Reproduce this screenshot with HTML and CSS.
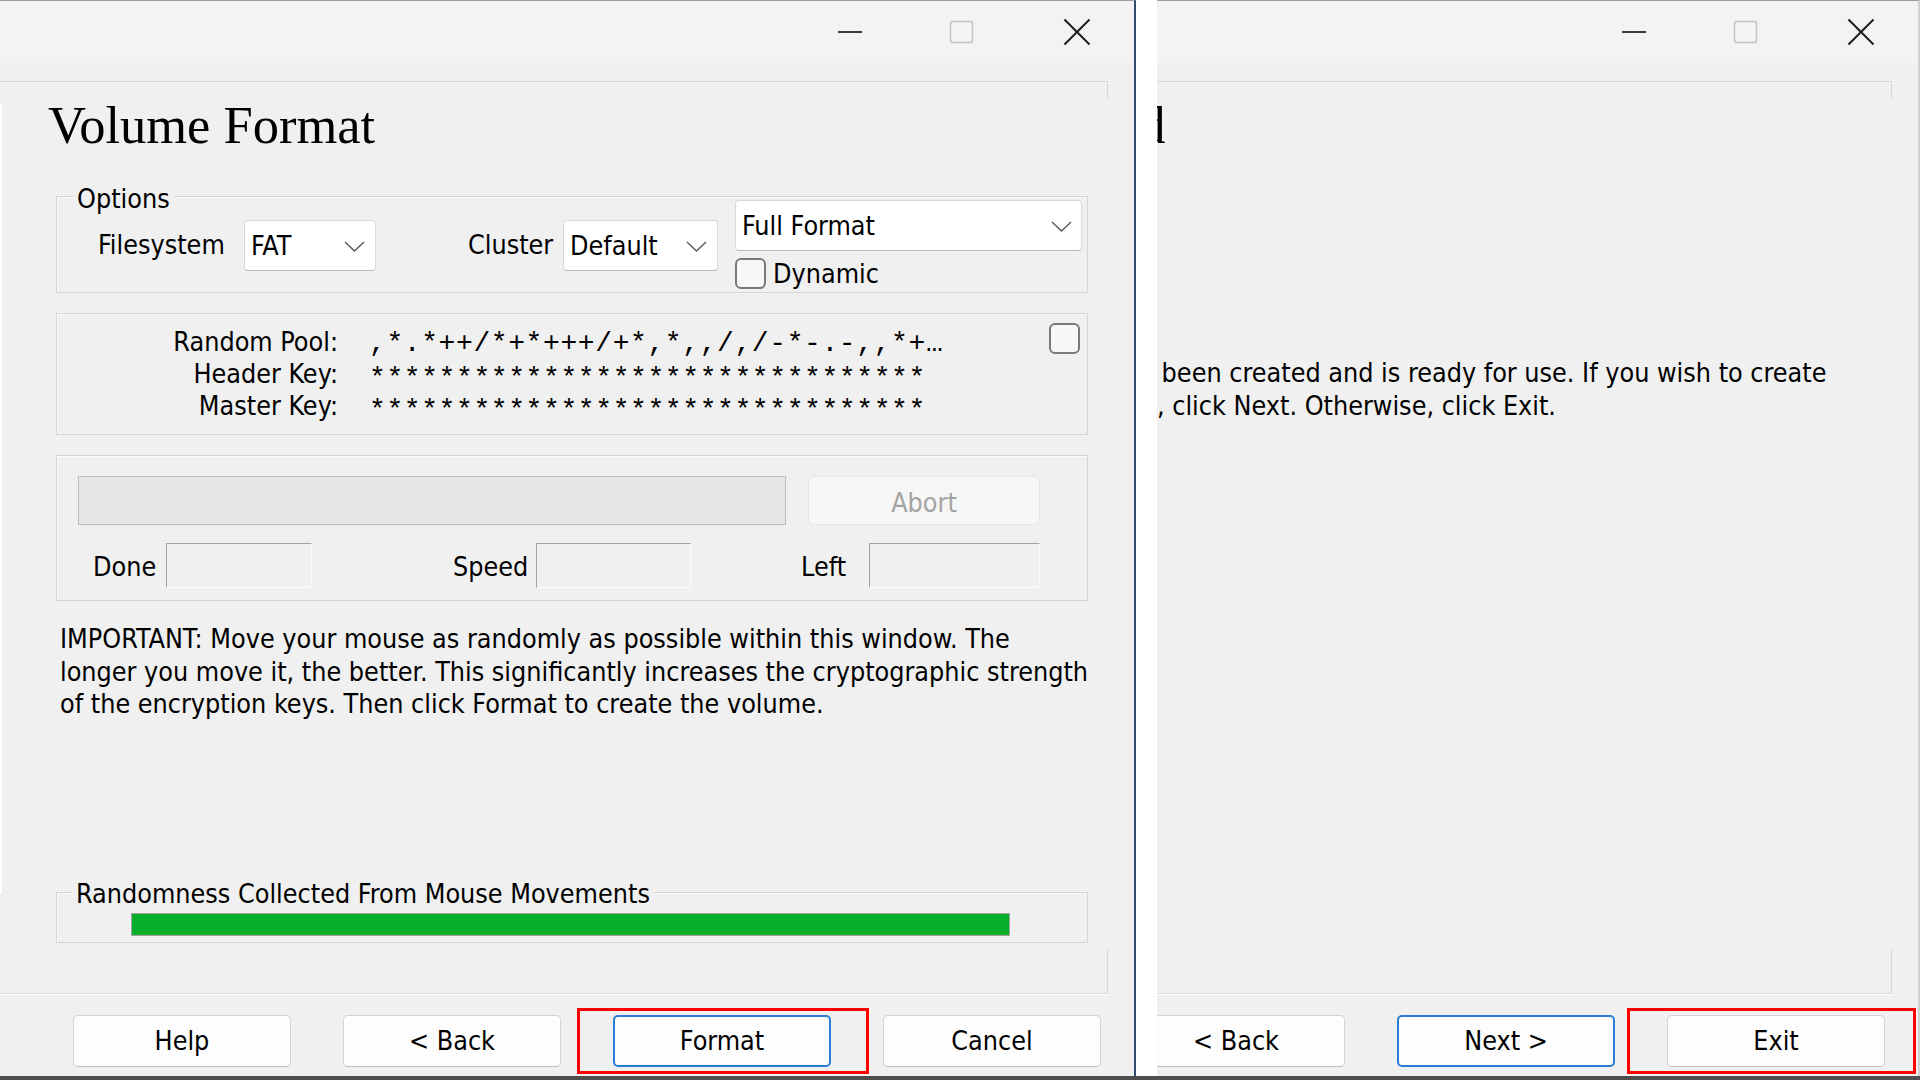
FILE: index.html
```html
<!DOCTYPE html>
<html>
<head>
<meta charset="utf-8">
<title>VeraCrypt Volume Creation Wizard</title>
<link rel="stylesheet" href="styles.css">
</head>
<body>
<div class="screen">
  <div class="win win-left">
    <div class="titlebar">
      <div class="cap cap-min"><svg width="26" height="4" viewBox="0 0 26 4"><path d="M1 2h24" stroke="#1b1b1b" stroke-width="1.7"/></svg></div>
      <div class="cap"><svg width="25" height="24" viewBox="0 0 25 24"><rect x="1.5" y="1.5" width="22" height="21" rx="2.5" fill="none" stroke="#c2c2c2" stroke-width="1.5"/></svg></div>
      <div class="cap"><svg width="28" height="28" viewBox="0 0 28 28"><path d="M1.5 1.5l25 25M26.5 1.5l-25 25" stroke="#1b1b1b" stroke-width="2"/></svg></div>
    </div>
    <div class="band"></div>
    <div class="frame">
      <div class="page">
        <h1 class="title">Volume Format</h1>

        <div class="group g-options">
          <span class="legend">Options</span>
          <div class="opt-row">
            <span class="lbl lbl-fs">Filesystem</span>
            <div class="combo c-fs"><span>FAT</span><svg width="21" height="11" viewBox="0 0 21 11"><path d="M1 1l9.5 9 9.5-9" fill="none" stroke="#5c5c5c" stroke-width="1.5"/></svg></div>
            <span class="lbl lbl-cl">Cluster</span>
            <div class="combo c-cl"><span>Default</span><svg width="21" height="11" viewBox="0 0 21 11"><path d="M1 1l9.5 9 9.5-9" fill="none" stroke="#5c5c5c" stroke-width="1.5"/></svg></div>
            <div class="opt-col">
              <div class="combo c-ff"><span>Full Format</span><svg width="21" height="11" viewBox="0 0 21 11"><path d="M1 1l9.5 9 9.5-9" fill="none" stroke="#5c5c5c" stroke-width="1.5"/></svg></div>
              <div class="check-row"><span class="checkbox"></span><span>Dynamic</span></div>
            </div>
          </div>
        </div>

        <div class="group g-pool">
          <div class="pool-grid">
            <span class="plabel">Random Pool:</span>
            <span class="pval">,*.*++/*+*+++/+*,*,,/,/-*-.-,,*+…</span>
            <span class="checkbox pool-check"></span>
            <span class="plabel">Header Key:</span>
            <span class="pval pkey">********************************</span>
            <span></span>
            <span class="plabel">Master Key:</span>
            <span class="pval pkey">********************************</span>
            <span></span>
          </div>
        </div>

        <div class="group g-progress">
          <div class="prog-row">
            <div class="progress"></div>
            <div class="btn abort">Abort</div>
          </div>
          <div class="stat-row">
            <span class="slbl s-done">Done</span><div class="sbox b-done"></div>
            <span class="slbl s-speed">Speed</span><div class="sbox b-speed"></div>
            <span class="slbl s-left">Left</span><div class="sbox b-left"></div>
          </div>
        </div>

        <p class="info">IMPORTANT: Move your mouse as randomly as possible within this window. The<br>longer you move it, the better. This significantly increases the cryptographic strength<br>of the encryption keys. Then click Format to create the volume.</p>

        <div class="group g-rand">
          <span class="legend legend-rand">Randomness Collected From Mouse Movements</span>
          <div class="randbar"></div>
        </div>
      </div>
    </div>
    <div class="buttons">
      <div class="btn">Help</div>
      <div class="btn">&lt; Back</div>
      <div class="btn btn-default">Format</div>
      <div class="btn">Cancel</div>
      <div class="mark mark-format"></div>
    </div>
  </div>

  <div class="gap"></div>

  <div class="win-clip">
    <div class="win win-right">
      <div class="titlebar">
        <div class="cap cap-min"><svg width="26" height="4" viewBox="0 0 26 4"><path d="M1 2h24" stroke="#1b1b1b" stroke-width="1.7"/></svg></div>
        <div class="cap"><svg width="25" height="24" viewBox="0 0 25 24"><rect x="1.5" y="1.5" width="22" height="21" rx="2.5" fill="none" stroke="#c2c2c2" stroke-width="1.5"/></svg></div>
        <div class="cap"><svg width="28" height="28" viewBox="0 0 28 28"><path d="M1.5 1.5l25 25M26.5 1.5l-25 25" stroke="#1b1b1b" stroke-width="2"/></svg></div>
      </div>
      <div class="band"></div>
      <div class="frame">
        <div class="page">
          <h1 class="title title-created">Volume Created</h1>
          <p class="info info-created"><span class="pre pre1"></span> been created and is ready for use. If you wish to create<br><span class="pre pre2"></span>, click Next. Otherwise, click Exit.</p>
        </div>
      </div>
      <div class="buttons buttons-right">
        <div class="btn">&lt; Back</div>
        <div class="btn btn-default">Next &gt;</div>
        <div class="btn">Exit</div>
        <div class="mark mark-exit"></div>
      </div>
    </div>
  </div>
</div>
<div class="taskstrip"></div>
</body>
</html>
```

FILE: styles.css
```css
* { box-sizing: border-box; margin: 0; padding: 0; }
html, body { width: 1920px; height: 1080px; overflow: hidden; }
body {
  background: #ffffff;
  font-family: "DejaVu Sans Condensed", "Liberation Sans", sans-serif;
  font-size: 26.7px;
  color: #000;
}
.screen { display: flex; height: 1076px; }

.win {
  width: 1136px;
  height: 1076px;
  flex: none;
  background: #f0f0f0;
  border-top: 1px solid #9d9d9d;
  border-right: 2px solid #34496e;
  display: flex;
  flex-direction: column;
}
.win-right { border-right-color: #d0d0d0; margin-left: -373px; }
.gap { width: 21px; flex: none; background: #fff; }
.win-clip { width: 763px; flex: none; overflow: hidden; display: flex; }

.titlebar {
  height: 62px;
  flex: none;
  background: #f3f3f3;
  display: flex;
  justify-content: flex-end;
}
.cap { width: 115px; display: flex; align-items: center; justify-content: center; }
.cap-min svg { margin-left: 6px; }
.band { height: 18px; flex: none; }

.frame {
  width: 1108px;
  height: 913px;
  flex: none;
  border-top: 1px solid #d7d7d7;
  border-bottom: 1px solid #d7d7d7;
  box-shadow: 0 1px 0 #ffffff;
  position: relative;
}
.frame::before, .frame::after {
  content: "";
  position: absolute;
  right: 0;
  width: 1px;
  background: #d7d7d7;
}
.frame::before { top: 0; height: 16px; }
.frame::after { bottom: 0; height: 44px; }

.page { display: flex; flex-direction: column; position: relative; }
.page::before {
  content: "";
  position: absolute;
  left: 0;
  top: 22px;
  width: 2px;
  height: 790px;
  background: #ffffff;
}

.title {
  font-family: "Liberation Serif", "Times New Roman", serif;
  font-weight: normal;
  font-size: 52.5px;
  line-height: 60px;
  margin: 13px 0 0 48px;
  white-space: nowrap;
}
.title-created { letter-spacing: -0.4px; }

.group {
  margin-left: 56px;
  width: 1032px;
  flex: none;
  border: 1px solid #d5d5d5;
  box-shadow: inset 1px 1px 0 #fafafa;
  position: relative;
}
.legend {
  position: absolute;
  left: 16px;
  top: -11px;
  line-height: 26px;
  padding: 0 4px;
  background: #f0f0f0;
  white-space: nowrap;
}
.legend-rand { left: 15px; top: -12px; }

/* Options */
.g-options { margin-top: 41px; height: 97px; }
.opt-row { display: flex; align-items: flex-start; padding-left: 41px; }
.lbl { line-height: 32px; margin-top: 32px; white-space: nowrap; flex: none; }
.lbl-fs { width: 146px; }
.lbl-cl { width: 95px; margin-left: 92px; }
.combo {
  height: 51px;
  flex: none;
  background: #ffffff;
  border: 1px solid #d9d9d9;
  border-bottom-color: #b9b9b9;
  border-radius: 4px;
  display: flex;
  align-items: center;
  justify-content: space-between;
  padding: 1px 10px 0 6px;
  line-height: 48px;
  white-space: nowrap;
}
.c-fs { width: 132px; margin-top: 23px; }
.c-cl { width: 155px; margin-top: 23px; }
.opt-col { margin-left: 17px; width: 347px; margin-top: 3px; flex: none; }
.c-ff { width: 347px; padding-right: 9px; }
.check-row { display: flex; align-items: center; height: 32px; margin-top: 6px; line-height: 32px; }
.check-row span:last-child { position: relative; top: 1px; }
.checkbox {
  display: block;
  width: 31px;
  height: 31px;
  flex: none;
  border: 2px solid #7a7a7a;
  border-radius: 6px;
  background: #f7f7f7;
}
.check-row .checkbox { margin-right: 7px; }

/* Random pool */
.g-pool { margin-top: 20px; height: 122px; padding: 12px 7px 0 0; }
.pool-grid {
  display: grid;
  grid-template-columns: 281px 1fr 31px;
  grid-auto-rows: 32px;
  column-gap: 31px;
}
.plabel { text-align: right; line-height: 32px; white-space: nowrap; }
.pval {
  font-family: "Liberation Mono", "Courier New", monospace;
  font-size: 28px;
  letter-spacing: 0.6px;
  line-height: 32px;
  height: 32px;
  position: relative;
  top: 2px;
  white-space: nowrap;
}
.pkey { top: 5px; }
.pool-check { margin-top: -3px; }

/* Progress */
.g-progress { margin-top: 20px; height: 146px; padding: 20px 0 0 21px; }
.prog-row { display: flex; }
.progress {
  width: 708px;
  height: 49px;
  flex: none;
  background: #e6e6e6;
  border: 1px solid #bcbcbc;
}
.stat-row { display: flex; align-items: flex-start; margin-top: 18px; }
.slbl { line-height: 32px; margin-top: 8px; white-space: nowrap; flex: none; }
.s-done { margin-left: 15px; width: 73px; }
.s-speed { margin-left: 141px; width: 83px; }
.s-left { margin-left: 110px; width: 68px; }
.sbox {
  height: 45px;
  flex: none;
  border: 1px solid;
  border-color: #a3a3a3 #fbfbfb #fbfbfb #a3a3a3;
}
.b-done { width: 146px; }
.b-speed { width: 155px; }
.b-left { width: 171px; }

/* Info text */
.info { margin: 22px 0 0 60px; line-height: 32.5px; white-space: nowrap; }
.info-created { margin-top: 202px; }
.pre { display: inline-block; vertical-align: top; height: 1px; }
.pre1 { width: 310px; }
.pre2 { width: 313px; }

/* Randomness */
.g-rand { margin-top: 171px; height: 51px; padding: 20px 0 0 74px; }
.randbar {
  width: 879px;
  height: 23px;
  background: #06ae29;
  border: 1px solid #a3a3a3;
}

/* Buttons */
.buttons {
  height: 82px;
  flex: none;
  display: flex;
  align-items: flex-start;
  gap: 52px;
  padding: 21px 0 0 73px;
  position: relative;
}
.buttons-right { padding-left: 343px; }
.btn {
  width: 218px;
  height: 52px;
  flex: none;
  background: #fdfdfd;
  border: 1px solid #d3d3d3;
  border-bottom-color: #bcbcbc;
  border-radius: 5px;
  text-align: center;
  line-height: 50px;
  white-space: nowrap;
}
.btn-default { border: 2px solid #2a7bd3; line-height: 48px; }
.abort {
  margin-left: 22px;
  width: 232px;
  height: 49px;
  line-height: 47px;
  padding-top: 2px;
  color: #a3a3a3;
  background: #f6f6f6;
  border-color: #e6e6e6;
}
.mark {
  position: absolute;
  top: 14px;
  height: 66px;
  border: 3px solid #ff0000;
}
.mark-format { left: 577px; width: 292px; }
.mark-exit { left: 843px; width: 289px; }

.taskstrip { height: 4px; background: #4e4e4e; }
```
